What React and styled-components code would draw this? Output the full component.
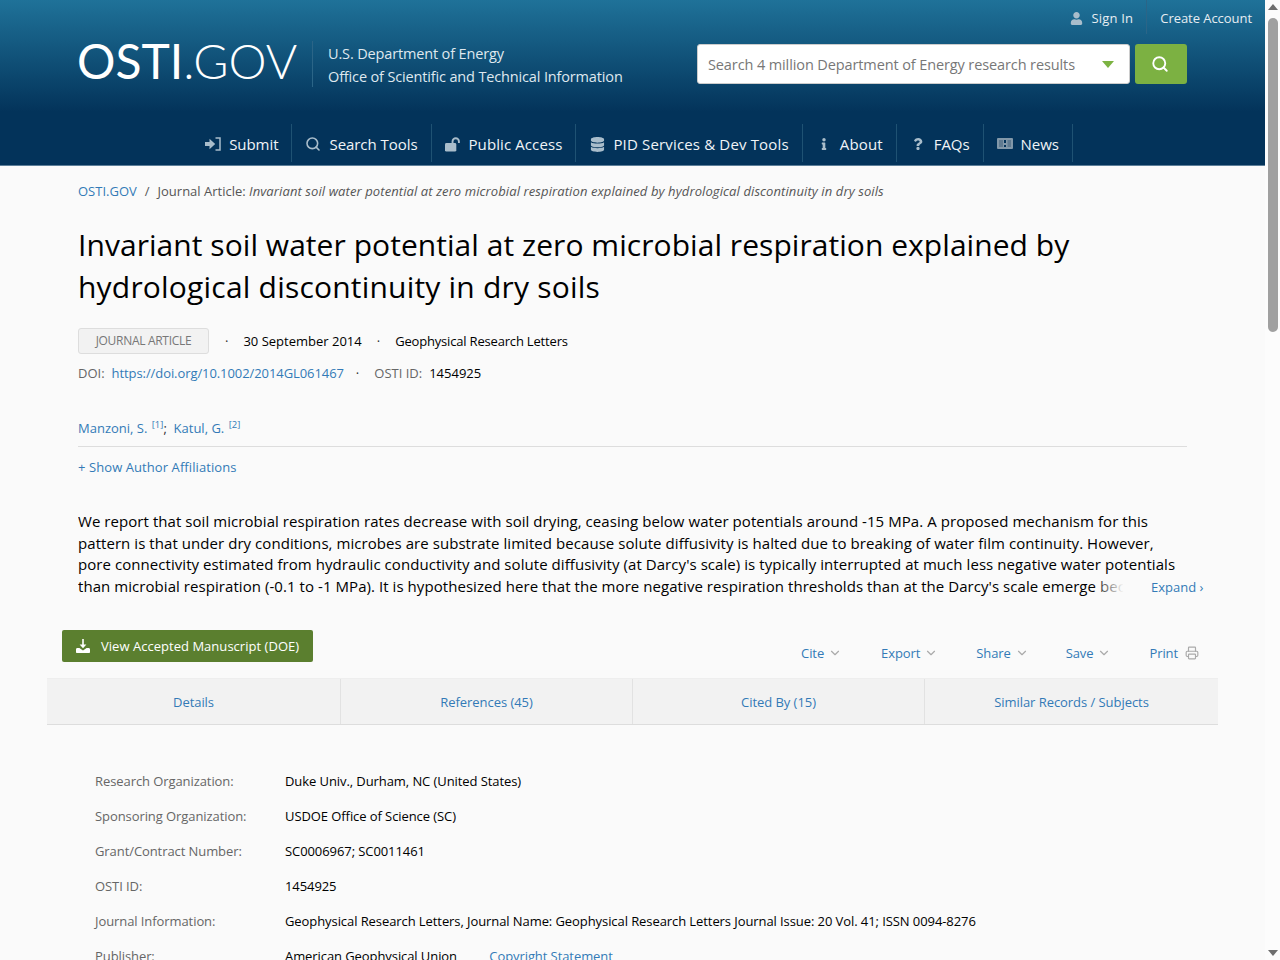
import React from "react";
import styled, { createGlobalStyle } from "styled-components";
import { FaUser, FaDatabase, FaInfo, FaQuestion } from "react-icons/fa";
import { LuChevronDown, LuPrinter, LuSearch } from "react-icons/lu";

const Global = createGlobalStyle`
  html, body { margin: 0; padding: 0; height: 100%; overflow: hidden; }
  body { font-family: "Open Sans", "Noto Sans", sans-serif; color: #000; background: #fafafa; }
  a { text-decoration: none; color: #337ab7; }
`;

const Shell = styled.div`
  display: flex;
  height: 100vh;
  overflow: hidden;
`;

const Page = styled.div`
  width: 1265px;
  flex: none;
  background: #fafafa;
`;

// the browser's scrollbar does not show up in the photo, so it is drawn
const Rail = styled.div`
  width: 15px;
  flex: none;
  background: #fcfcfc;
  display: flex;
  flex-direction: column;
  align-items: center;
`;

const RailArrow = styled.span`
  flex: none;
  width: 0;
  height: 0;
  border-left: 5px solid transparent;
  border-right: 5px solid transparent;
  margin: ${(p) => (p.$down ? "auto 0 4px" : "4px 0 0")};
  border-bottom: ${(p) => (p.$down ? "none" : "6px solid #6e6e6e")};
  border-top: ${(p) => (p.$down ? "6px solid #6e6e6e" : "none")};
`;

const RailThumb = styled.span`
  flex: none;
  width: 10px;
  height: 314px;
  margin-top: 8px;
  border-radius: 5px;
  background: #a0a0a0;
`;

const Header = styled.header`
  height: 165px;
  background: linear-gradient(#1f7299 0, #03335a 112px, #03335a 100%);
  border-bottom: 1px solid #5d7f99;
  display: flex;
  flex-direction: column;
`;

const TopLinks = styled.div`
  display: flex;
  justify-content: flex-end;
  height: 34px;
`;

const TopLink = styled.a`
  display: flex;
  align-items: center;
  gap: 8px;
  padding: 2px 13px 0 13px;
  color: #e6edf2;
  font-size: 13px;
  letter-spacing: ${(p) => (p.$divided ? "-0.05px" : "0.2px")};
  border-left: ${(p) => (p.$divided ? "1px solid #2b6587" : "none")};
  svg { color: #a9bdcb; font-size: 13px; }
`;

const BrandRow = styled.div`
  display: flex;
  align-items: center;
  height: 60px;
  padding: 0 78px;
`;

const Logo = styled.div`
  color: #fff;
  font-family: "Lato", sans-serif;
  font-size: 48px;
  line-height: 46px;
  font-weight: 400;
  width: 235px;
  margin: -6px 0 0 -1px;
  span { font-weight: 300; }
`;

const BrandText = styled.div`
  border-left: 1px solid #2b6587;
  padding: 1px 0 1px 15px;
  height: 44px;
  color: #dfe8ef;
  font-size: 14.5px;
  line-height: 23px;
  letter-spacing: -0.15px;
  white-space: nowrap;
`;

const SearchArea = styled.div`
  display: flex;
  margin-left: auto;
  gap: 5px;
`;

const SearchBox = styled.div`
  width: 433px;
  height: 40px;
  background: #fff;
  border-radius: 3px;
  border: 1px solid #ccc;
  box-sizing: border-box;
  display: flex;
  align-items: center;
  justify-content: space-between;
  padding: 1px 15px 0 10px;
  color: #777;
  font-size: 14.5px;
  letter-spacing: -0.11px;
`;

const Caret = styled.span`
  width: 0;
  height: 0;
  border-left: 6px solid transparent;
  border-right: 6px solid transparent;
  border-top: 7px solid #7cb342;
`;

const SearchButton = styled.button`
  width: 52px;
  height: 40px;
  padding: 0 3px 0 0;
  border: none;
  border-radius: 3px;
  background: #7cb142;
  color: #fff;
  display: flex;
  align-items: center;
  justify-content: center;
`;

const Nav = styled.nav`
  display: flex;
  justify-content: center;
  margin: auto 0 3px;
  height: 38px;
`;

const NavItem = styled.a`
  display: flex;
  align-items: center;
  gap: 8px;
  padding: 2px 13px 0;
  color: #f0f4f7;
  font-size: 15px;
  letter-spacing: ${(p) => p.$spacing}px;
  border-right: 1px solid #1f5273;
`;

const NavIcon = styled.span`
  width: 16px;
  display: flex;
  justify-content: center;
  color: #a9bdcb;
  font-size: 14px;
`;

const Main = styled.main`
  width: 1109px;
  margin-left: 78px;
`;

const Crumbs = styled.div`
  padding-top: 16px;
  font-size: 13px;
  line-height: 18px;
  color: #555;
  i { font-style: italic; letter-spacing: 0.1px; }
  b { font-weight: 400; margin: 0 8px; }
`;

const Title = styled.h1`
  margin: 24px 0 0;
  font-size: 30px;
  line-height: 42px;
  font-weight: 400;
  letter-spacing: 0.05px;
  span { letter-spacing: 0.2px; }
`;

const MetaRow = styled.div`
  display: flex;
  align-items: center;
  margin-top: ${(p) => p.$top}px;
  font-size: 13px;
  line-height: 18px;
  white-space: nowrap;
  a { letter-spacing: -0.08px; }
`;

const Badge = styled.span`
  width: 131px;
  height: 26px;
  box-sizing: border-box;
  border: 1px solid #ddd;
  border-radius: 3px;
  background: #f2f2f2;
  color: #777;
  font-size: 12px;
  letter-spacing: -0.3px;
  display: flex;
  align-items: center;
  justify-content: center;
`;

const Dot = styled.span`
  margin: 0 ${(p) => p.$right}px 0 ${(p) => p.$left}px;
  color: #333;
`;

const Journal = styled.span`
  letter-spacing: -0.18px;
`;

const Muted = styled.span`
  color: #666;
  margin-right: 7px;
`;

const Authors = styled.div`
  margin-top: 35px;
  padding-bottom: 7px;
  border-bottom: 1px solid #ddd;
  font-size: 13px;
  line-height: 22px;
  color: #333;
  sup { font-size: 9.5px; line-height: 0; color: #337ab7; margin-left: 1px; }
`;

const ShowMore = styled.a`
  display: block;
  margin-top: 10px;
  font-size: 13px;
  line-height: 20px;
  letter-spacing: 0.08px;
`;

const Abstract = styled.div`
  position: relative;
  margin-top: 34px;
  height: 87px;
  overflow: hidden;
  font-size: 15px;
  line-height: 21.67px;
  letter-spacing: 0.06px;
  white-space: nowrap;
`;

const Fade = styled.span`
  position: absolute;
  right: 58px;
  bottom: 0;
  width: 36px;
  height: 22px;
  background: linear-gradient(to right, rgba(250, 250, 250, 0), #fafafa 85%);
`;

const Expand = styled.a`
  display: block;
  margin: -21px 0 0 1073px;
  font-size: 13px;
  line-height: 20px;
  white-space: nowrap;
`;

const ActionRow = styled.div`
  display: flex;
  justify-content: space-between;
  width: 1171px;
  margin: 33px 0 0 -16px;
`;

const ManuscriptButton = styled.a`
  display: flex;
  align-items: center;
  gap: 11px;
  height: 32px;
  padding: 0 14px;
  background: #5b7f2f;
  border-radius: 2px;
  color: #fff;
  font-size: 13px;
  letter-spacing: 0.03px;
  svg { width: 14px; height: 14px; }
`;

const Tools = styled.div`
  display: flex;
  padding-top: 14px;
  margin-right: 34px;
`;

const Tool = styled.a`
  display: flex;
  align-items: center;
  gap: ${(p) => p.$gap}px;
  margin-left: ${(p) => p.$left}px;
  font-size: 13px;
  line-height: 18px;
  letter-spacing: -0.1px;
  svg { color: #aaa; }
`;

const Tabs = styled.div`
  display: grid;
  grid-template-columns: 293px 292px 292px 1fr;
  width: 1171px;
  margin: 16px 0 0 -31px;
  height: 45px;
  background: #f2f2f2;
  border-top: 1px solid #eee;
  border-bottom: 1px solid #ddd;
`;

const Tab = styled.a`
  display: flex;
  align-items: center;
  justify-content: center;
  font-size: 13px;
  letter-spacing: -0.05px;
  border-left: ${(p) => (p.$first ? "none" : "1px solid #e2e2e2")};
`;

const Details = styled.dl`
  margin: 39px 0 0 17px;
  display: grid;
  grid-template-columns: 190px 1fr;
  grid-auto-rows: 35px;
  font-size: 13px;
  letter-spacing: -0.08px;
  line-height: 35px;
  white-space: nowrap;
  dt { color: #666; }
  dd { margin: 0; }
  a { margin-left: 29px; }
`;

const DownloadIcon = () => (
  <svg viewBox="0 0 14 14" fill="currentColor" aria-hidden="true">
    <path d="M6.200 0h1.600v5.500H10.400L7 9.200 3.600 5.500H6.200z" />
    <path d="M0 10.500c0-1 .6-1.500 1.500-1.500H3.400L7 11.400 10.600 9h1.900c.9 0 1.500.5 1.500 1.500V13c0 .6-.4 1-1 1H1c-.6 0-1-.4-1-1z" />
  </svg>
);

const SubmitIcon = () => (
  <svg width="16" height="14" viewBox="0 0 16 14" aria-hidden="true">
    <path d="M0 5h4.500V1.800L10.200 7l-5.700 5.200V9H0z" fill="currentColor" />
    <path d="M10.500 1H15v12h-4.500" fill="none" stroke="currentColor" strokeWidth="1.500" />
  </svg>
);

const OpenLockIcon = () => (
  <svg width="17" height="15" viewBox="0 0 17 15" aria-hidden="true">
    <rect x="0" y="6" width="12" height="9" rx="1.500" fill="currentColor" />
    <path d="M8 6.500V4.200a3.400 3.400 0 0 1 6.800 0V6" fill="none" stroke="currentColor" strokeWidth="2" />
  </svg>
);

const NewsIcon = () => (
  <svg width="16" height="12" viewBox="0 0 16 12" aria-hidden="true">
    <rect x="0" y="0" width="16" height="11" rx="1" fill="#8298a9" />
    <rect x="2" y="2" width="4" height="7" fill="#5f7a90" />
    <rect x="7" y="2" width="2" height="3" fill="#03335a" />
    <rect x="10.500" y="2" width="3.500" height="7" fill="#5f7a90" />
    <rect x="7" y="7" width="2" height="2" fill="#03335a" />
  </svg>
);

const navItems = [
  { label: "Submit", spacing: -0.05, icon: <SubmitIcon /> },
  { label: "Search Tools", spacing: -0.05, icon: <LuSearch size={18} strokeWidth={2.400} /> },
  { label: "Public Access", spacing: 0.1, icon: <OpenLockIcon /> },
  { label: "PID Services & Dev Tools", spacing: 0.16, icon: <FaDatabase size={15} /> },
  { label: "About", spacing: 0.15, icon: <FaInfo size={12} /> },
  { label: "FAQs", spacing: -0.05, icon: <FaQuestion size={12} /> },
  { label: "News", spacing: -0.05, icon: <NewsIcon /> },
];

const tools = [
  { label: "Cite", left: 0 },
  { label: "Export", left: 39 },
  { label: "Share", left: 38 },
  { label: "Save", left: 37 },
];

const tabs = ["Details", "References (45)", "Cited By (15)", "Similar Records / Subjects"];

const rows = [
  ["Research Organization:", "Duke Univ., Durham, NC (United States)"],
  ["Sponsoring Organization:", "USDOE Office of Science (SC)"],
  ["Grant/Contract Number:", "SC0006967; SC0011461"],
  ["OSTI ID:", "1454925"],
  ["Journal Information:", "Geophysical Research Letters, Journal Name: Geophysical Research Letters Journal Issue: 20 Vol. 41; ISSN 0094-8276"],
];

export default function App() {
  return (
    <Shell>
      <Global />
      <Page>
        <Header>
          <TopLinks>
            <TopLink href="#"><FaUser /> Sign In</TopLink>
            <TopLink href="#" $divided>Create Account</TopLink>
          </TopLinks>
          <BrandRow>
            <Logo>OSTI<span>.GOV</span></Logo>
            <BrandText>
              U.S. Department of Energy
              <br />
              Office of Scientific and Technical Information
            </BrandText>
            <SearchArea>
              <SearchBox>
                Search 4 million Department of Energy research results
                <Caret />
              </SearchBox>
              <SearchButton><LuSearch size={18} strokeWidth={2.500} /></SearchButton>
            </SearchArea>
          </BrandRow>
          <Nav>
            {navItems.map((item) => (
              <NavItem href="#" key={item.label} $spacing={item.spacing}>
                <NavIcon>{item.icon}</NavIcon>
                {item.label}
              </NavItem>
            ))}
          </Nav>
        </Header>
        <Main>
          <Crumbs>
            <a href="#">OSTI.GOV</a>
            <b>/</b>
            Journal Article: <i>Invariant soil water potential at zero microbial respiration explained by hydrological discontinuity in dry soils</i>
          </Crumbs>
          <Title>
            Invariant soil water potential at zero microbial respiration explained by <span>hydrological discontinuity in dry soils</span>
          </Title>
          <MetaRow $top={20}>
            <Badge>JOURNAL ARTICLE</Badge>
            <Dot $left={16} $right={15}>·</Dot>
            30 September 2014
            <Dot $left={15} $right={15}>·</Dot>
            <Journal>Geophysical Research Letters</Journal>
          </MetaRow>
          <MetaRow $top={10}>
            <Muted>DOI:</Muted>
            <a href="#">https://doi.org/10.1002/2014GL061467</a>
            <Dot $left={12} $right={15}>·</Dot>
            <Muted>OSTI ID:</Muted>
            1454925
          </MetaRow>
          <Authors>
            <a href="#">Manzoni, S.</a> <sup>[1]</sup>;&nbsp; <a href="#">Katul, G.</a> <sup>[2]</sup>
          </Authors>
          <ShowMore href="#">+ Show Author Affiliations</ShowMore>
          <Abstract>
            We report that soil microbial respiration rates decrease with soil drying, ceasing below water potentials around -15 MPa. A proposed mechanism for this
            <br />
            pattern is that under dry conditions, microbes are substrate limited because solute diffusivity is halted due to breaking of water film continuity. However,
            <br />
            pore connectivity estimated from hydraulic conductivity and solute diffusivity (at Darcy's scale) is typically interrupted at much less negative water potentials
            <br />
            than microbial respiration (-0.1 to -1 MPa). It is hypothesized here that the more negative respiration thresholds than at the Darcy's scale emerge bec
            <Fade />
          </Abstract>
          <Expand href="#">Expand ›</Expand>
          <ActionRow>
            <ManuscriptButton href="#"><DownloadIcon /> View Accepted Manuscript (DOE)</ManuscriptButton>
            <Tools>
              {tools.map((t) => (
                <Tool href="#" key={t.label} $left={t.left} $gap={4}>
                  {t.label} <LuChevronDown size={14} />
                </Tool>
              ))}
              <Tool href="#" $left={38} $gap={7}>Print <LuPrinter size={14} /></Tool>
            </Tools>
          </ActionRow>
          <Tabs>
            {tabs.map((t, i) => (
              <Tab href="#" key={t} $first={i === 0}>{t}</Tab>
            ))}
          </Tabs>
          <Details>
            {rows.map(([k, v]) => (
              <React.Fragment key={k}>
                <dt>{k}</dt>
                <dd>{v}</dd>
              </React.Fragment>
            ))}
            <dt>Publisher:</dt>
            <dd>American Geophysical Union <a href="#">Copyright Statement</a></dd>
          </Details>
        </Main>
      </Page>
      <Rail>
        <RailArrow />
        <RailThumb />
        <RailArrow $down />
      </Rail>
    </Shell>
  );
}
